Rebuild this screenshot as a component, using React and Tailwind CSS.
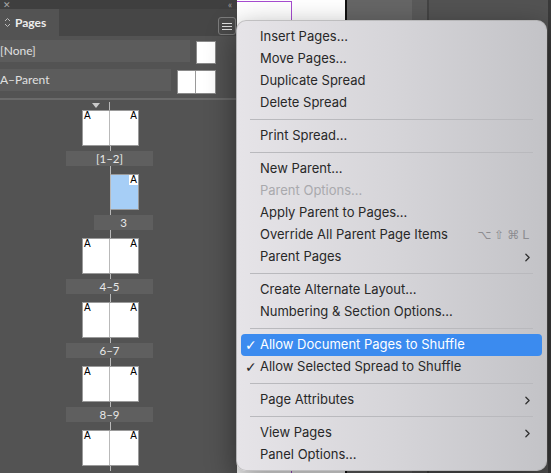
import { ChevronRight } from 'lucide-react';

const MENU = [
  { label: 'Insert Pages...' },
  { label: 'Move Pages...' },
  { label: 'Duplicate Spread' },
  { label: 'Delete Spread' },
  'sep',
  { label: 'Print Spread...' },
  'sep',
  { label: 'New Parent...' },
  { label: 'Parent Options...', disabled: true },
  { label: 'Apply Parent to Pages...' },
  { label: 'Override All Parent Page Items', shortcut: true },
  { label: 'Parent Pages', sub: true },
  'sep',
  { label: 'Create Alternate Layout...' },
  { label: 'Numbering & Section Options...' },
  'sep',
  { label: 'Allow Document Pages to Shuffle', checked: true, active: true },
  { label: 'Allow Selected Spread to Shuffle', checked: true },
  'sep',
  { label: 'Page Attributes', sub: true },
  'sep',
  { label: 'View Pages', sub: true },
  { label: 'Panel Options...' },
];

const SPREADS = [
  { label: '[1–2]', single: false },
  { label: '3', single: true },
  { label: '4–5' },
  { label: '6–7' },
  { label: '8–9' },
  { label: null },
];

function Seg({ h }) {
  return <div className={`ml-[44px] w-px bg-[#b9b9b9] ${h}`} />;
}

function PageA({ right, white }) {
  return (
    <span
      className={`absolute top-0 ${right ? 'right-0' : 'left-0'} px-[1px] text-[10px] leading-[10px] text-black ${
        white ? 'bg-white' : ''
      }`}
      style={{ fontFamily: '"Liberation Sans", Arial, sans-serif' }}
    >
      A
    </span>
  );
}

function Spread({ s }) {
  if (s.single) {
    return (
      <div className="ml-[44px] h-[36px] w-[29px] relative border border-l-[#b9b9b9] border-[#9a9a9a] bg-[#a6cef6]">
        <PageA right white />
      </div>
    );
  }
  return (
    <div className="ml-[16px] h-[36px] w-[57px] flex border border-[#9a9a9a] bg-white">
      <div className="relative w-[27px] border-r border-[#b9b9b9]">
        <PageA />
      </div>
      <div className="relative flex-1">
        <PageA right />
      </div>
    </div>
  );
}

function PagesList() {
  return (
    <div className="ml-[66px] w-[87px] flex flex-col pt-[2px]">
      <div className="flex h-[8px]">
        <div className="ml-[26px] mt-[1px] h-0 w-0 border-x-[4.5px] border-x-transparent border-t-[5px] border-t-[#c9c9c9]" />
        <div className="ml-[9px] w-px bg-[#b9b9b9]" />
      </div>
      {SPREADS.map((s, i) => (
        <div key={i} className="flex flex-col">
          <Spread s={s} />
          <Seg h="h-[5px]" />
          {s.label && (
            <>
              <div
                className={`h-[15px] flex items-center justify-center bg-[#5f5f5f] text-[11.5px] text-[#e8e8e8] ${
                  s.single ? 'ml-[28px]' : ''
                }`}
              >
                {s.label}
              </div>
              <Seg h="h-[8px]" />
            </>
          )}
        </div>
      ))}
    </div>
  );
}

function PagesPanel() {
  return (
    <div
      className="w-[237px] shrink-0 flex flex-col bg-[#535353]"
      style={{ fontFamily: 'Lato, "Open Sans", sans-serif' }}
    >
      <div className="h-[9px] flex items-center justify-between bg-[#3f3f3f] pl-[3px] pr-[6px] text-[9px] leading-none text-[#a8a8a8]">
        <span>✕</span>
        <span className="tracking-[-1px]">‹‹</span>
      </div>
      <div className="h-[27px] flex bg-[#464646]">
        <div className="w-[59px] flex items-center gap-[4px] bg-[#535353] pl-[4px]">
          <svg width="7" height="11" viewBox="0 0 7 11" fill="none" stroke="#bdbdbd" strokeWidth="1">
            <path d="M1 4 L3.5 1.5 L6 4" />
            <path d="M1 7 L3.5 9.5 L6 7" />
          </svg>
          <span className="text-[12px] font-bold text-[#ececec]">Pages</span>
        </div>
        <div className="flex-1 flex items-start justify-end pt-[8px] pr-[1px]">
          <div className="w-[18px] h-[18px] flex flex-col items-center justify-center gap-[2px] rounded-[3px] border border-[#7c7c7c] bg-[#4a4a4a]">
            <div className="w-[10px] h-px bg-[#e0e0e0]" />
            <div className="w-[10px] h-px bg-[#e0e0e0]" />
            <div className="w-[10px] h-px bg-[#e0e0e0]" />
          </div>
        </div>
      </div>
      <div className="flex flex-col gap-[5px] pt-[4px] pr-[21px]">
        <div className="flex h-[24px] items-start gap-[6px]">
          <div className="w-[190px] h-[22px] flex items-center bg-[#5c5c5c] text-[12px] text-[#e0e0e0]">[None]</div>
          <div className="mt-[1px] w-[20px] h-[23px] bg-white border border-[#8a8a8a]" />
        </div>
        <div className="flex h-[24px] items-start gap-[6px]">
          <div className="w-[171px] h-[22px] flex items-center bg-[#5c5c5c] text-[12px] text-[#e0e0e0]">A–Parent</div>
          <div className="mt-[1px] w-[39px] h-[24px] flex bg-white border border-[#8a8a8a]">
            <div className="w-[18px] border-r border-[#9a9a9a]" />
          </div>
        </div>
      </div>
      <div className="mt-[5px] h-[2px] bg-[#6a6a6a]" />
      <PagesList />
    </div>
  );
}

function Canvas() {
  return (
    <div className="flex-1 flex">
      <div className="w-[108px] bg-white">
        <div className="mt-[1px] w-[55px] h-full border-t border-r border-[#a64bd0]" />
      </div>
      <div className="w-[2px] bg-[#111]" />
      <div className="w-[65px] bg-[#666666]" />
      <div className="w-[15px] bg-[#5a5a5a]" />
      <div className="w-[2px] bg-[#444]" />
      <div className="flex-1 bg-[#535353]" />
      <div className="w-[3px] bg-[#3a3a3a]" />
    </div>
  );
}

function Menu() {
  return (
    <div
      className="absolute left-[236px] top-[20px] w-[311px] rounded-[10px] border border-[#a8a8a8]/60 bg-gradient-to-r from-[#e6e4e8] via-[#d6d5d9] to-[#c3c3c7] px-[4px] pt-[5px] pb-[4px] shadow-[0_10px_30px_rgba(0,0,0,0.45)]"
      style={{ fontFamily: 'Inter, "Noto Sans", sans-serif' }}
    >
      {MENU.map((it, i) =>
        it === 'sep' ? (
          <div key={i} className="h-[11px] flex items-center px-[9px]">
            <div className="h-px w-full bg-[#b9b9bd]" />
          </div>
        ) : (
          <div
            key={i}
            className={`h-[22px] flex items-center rounded-[4px] pl-[4px] pr-[10px] text-[13px] ${
              it.active ? 'bg-[#3b8bef] text-white' : it.disabled ? 'text-[#a9a9ad]' : 'text-[#282828]'
            }`}
          >
            <span
              className="w-[15px] text-[14px] font-bold leading-none"
              style={{ fontFamily: '"DejaVu Sans", sans-serif' }}
            >
              {it.checked ? '✓' : ''}
            </span>
            <span className="flex-1">{it.label}</span>
            {it.shortcut && (
              <span
                className="text-[12px] tracking-[3px] text-[#8c8c90]"
                style={{ fontFamily: '"DejaVu Sans", sans-serif' }}
              >
                ⌥⇧⌘L
              </span>
            )}
            {it.sub && <ChevronRight size={13} strokeWidth={2.4} className="text-[#303030] -mr-[2px]" />}
          </div>
        )
      )}
    </div>
  );
}

export default function App() {
  return (
    <div className="relative w-[551px] h-[473px] overflow-hidden flex bg-[#535353]">
      <PagesPanel />
      <Canvas />
      <Menu />
    </div>
  );
}
